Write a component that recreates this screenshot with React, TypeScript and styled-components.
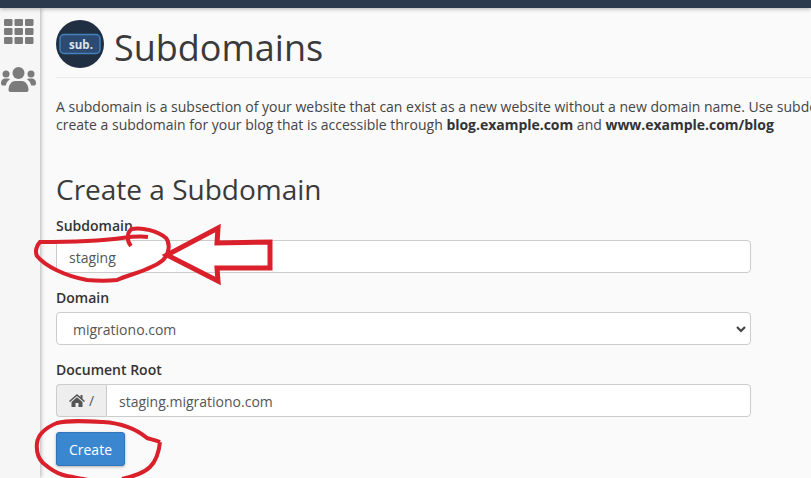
import React from "react";
import styled, { createGlobalStyle } from "styled-components";

const Global = createGlobalStyle`
  html, body { margin: 0; padding: 0; width: 811px; height: 478px; overflow: hidden; background: #fafafa; }
  body { font-family: "Open Sans", "Liberation Sans", sans-serif; color: #333; font-size: 14px; }
  * { box-sizing: border-box; }
`;

const Page = styled.div`
  position: relative;
  width: 811px;
  height: 478px;
  overflow: hidden;
  display: flex;
  flex-direction: column;
`;
const TopBar = styled.div`
  height: 8px;
  flex: none;
  background: #2b3a4c;
  box-shadow: 0 1px 4px rgba(0, 0, 0, 0.3);
  z-index: 2;
`;
const Body = styled.div`
  flex: 1;
  display: flex;
  min-height: 0;
`;
const Side = styled.nav`
  width: 40px;
  flex: none;
  background: #f6f6f6;
  box-shadow: 1px 0 4px rgba(0, 0, 0, 0.28);
  display: flex;
  flex-direction: column;
  align-items: flex-start;
  padding: 11px 0 0 1px;
  gap: 23px;
  color: #7b7b7b;
`;
const GridWrap = styled.span`
  display: flex;
  padding-left: 3px;
`;
const Main = styled.main`
  flex: 1;
  min-width: 0;
  padding: 12px 0 0 16px;
`;
const Header = styled.header`
  display: flex;
  align-items: center;
  gap: 10px;
  height: 58px;
  padding-bottom: 9px;
  border-bottom: 1px solid #eaeaea;
`;
const Title = styled.h1`
  margin: 8px 0 0;
  font-size: 36px;
  font-weight: 400;
  line-height: 48px;
  color: #3a3a3a;
`;
const Intro = styled.p`
  margin: 20px 0 0;
  font-size: 14px;
  line-height: 18px;
  white-space: nowrap;
  color: #444;
  b { font-weight: 700; color: #333; letter-spacing: -0.03px; }
`;
const SubTitle = styled.h2`
  margin: 36px 0 0;
  font-size: 28px;
  font-weight: 400;
  line-height: 38px;
  color: #3a3a3a;
`;
const Form = styled.div`
  width: 695px;
  margin-top: 8px;
`;
const Field = styled.div`
  margin-bottom: 15px;
`;
const Label = styled.label`
  display: block;
  font-size: 14px;
  font-weight: 600;
  line-height: 19px;
  margin-bottom: 5px;
  color: #333;
`;
const TextInput = styled.div<{ $flush?: boolean }>`
  height: 33px;
  flex: 1;
  background: #fff;
  border: 1px solid #ccc;
  border-radius: ${(p) => (p.$flush ? "0 4px 4px 0" : "4px")};
  padding: 1px 12px 0;
  display: flex;
  align-items: center;
  font-size: 14px;
  color: #555;
`;
const SelectBox = styled(TextInput)`
  justify-content: space-between;
  padding: 1px 4px 0 16px;
`;
const Group = styled.div`
  display: flex;
`;
const Addon = styled.div`
  width: 50px;
  height: 33px;
  flex: none;
  display: flex;
  align-items: center;
  justify-content: center;
  gap: 4px;
  background: #eee;
  border: 1px solid #ccc;
  border-right: 0;
  border-radius: 4px 0 0 4px;
  color: #555;
`;
const Button = styled.button`
  display: block;
  height: 34px;
  width: 69px;
  margin-top: 1px;
  padding: 0;
  background: #3a87cf;
  border: 1px solid #2f75b8;
  border-radius: 3px;
  box-shadow: 0 1px 3px rgba(0, 0, 0, 0.3);
  color: #fff;
  font: 400 14px "Open Sans", "Liberation Sans", sans-serif;
`;
const Overlay = styled.svg`
  position: absolute;
  left: 0;
  top: 0;
  pointer-events: none;
`;

const GridIcon = () => (
  <svg width="29.500" height="25" viewBox="0 0 29.500 25" fill="currentColor">
    {[0, 9, 18].map((y) =>
      [0, 10.5, 21].map((x) => <rect key={`${x}-${y}`} x={x} y={y} width="8.5" height="7" rx="1.2" />)
    )}
  </svg>
);
const UsersIcon = () => (
  <svg width="36" height="26" viewBox="0 0 36 26" fill="currentColor">
    <circle cx="17.500" cy="6" r="6" />
    <circle cx="5" cy="7" r="3.500" />
    <circle cx="30" cy="7" r="3.500" />
    <path d="M9.500 25c-1.200 0-2-.8-2-2 0-5 3-9 6.500-9h7c3.500 0 6.500 4 6.500 9 0 1.200-.8 2-2 2z" />
    <path d="M0 16c0-3 2-4.500 4-4.500h3c.8 0 1.500.3 2 .8-2.200 1.400-3.600 3.400-4.200 6.200H1.500C.6 18.500 0 17 0 16z" />
    <path d="M35 16c0-3-2-4.500-4-4.500h-3c-.8 0-1.500.3-2 .8 2.200 1.400 3.600 3.400 4.200 6.200h3.300c.9 0 1.500-1.500 1.500-2.500z" />
  </svg>
);
const LogoIcon = () => (
  <svg width="48" height="48" viewBox="0 0 48 48">
    <circle cx="24" cy="24" r="24" fill="#202f41" />
    <rect x="4" y="14.500" width="40" height="19" rx="4" fill="#2c4a72" stroke="#4382bd" strokeWidth="1.400" />
    <text x="25" y="28.500" textAnchor="middle" fontFamily="'Open Sans', sans-serif" fontWeight="700" fontSize="11.500" fill="#dfe4ea">sub.</text>
  </svg>
);
const HomeIcon = () => (
  <svg width="16" height="13" viewBox="0 0 16 13" fill="#555">
    <path d="M8 0 L11.500 3 V1 H13.500 V4.700 L16 7 L15 8 L8 2 L1 8 L0 7 Z" />
    <path d="M2.500 8 L8 3.300 L13.500 8 V13 H9.500 V9 H6.500 V13 H2.500 Z" />
  </svg>
);
const Chevron = () => (
  <svg width="10" height="7" viewBox="0 0 10 7" fill="none" stroke="#444" strokeWidth="2.200">
    <path d="M1 1 L5 5 L9 1" />
  </svg>
);

const App = () => (
  <Page>
    <Global />
    <TopBar />
    <Body>
      <Side>
        <GridWrap>
          <GridIcon />
        </GridWrap>
        <UsersIcon />
      </Side>
      <Main>
        <Header>
          <LogoIcon />
          <Title>Subdomains</Title>
        </Header>
        <Intro>
          A subdomain is a subsection of your website that can exist as a new website without a new domain name. Use subdomains to
          <br />
          create a subdomain for your blog that is accessible through <b>blog.example.com</b> and <b>www.example.com/blog</b>
        </Intro>
        <SubTitle>Create a Subdomain</SubTitle>
        <Form>
          <Field>
            <Label>Subdomain</Label>
            <TextInput>staging</TextInput>
          </Field>
          <Field>
            <Label>Domain</Label>
            <SelectBox>
              migrationo.com
              <Chevron />
            </SelectBox>
          </Field>
          <Field>
            <Label>Document Root</Label>
            <Group>
              <Addon>
                <HomeIcon /> /
              </Addon>
              <TextInput $flush>staging.migrationo.com</TextInput>
            </Group>
          </Field>
          <Button>Create</Button>
        </Form>
      </Main>
    </Body>
    <Overlay width="811" height="478" viewBox="0 0 811 478" fill="none" stroke="#d9202b" strokeWidth="4" strokeLinejoin="miter">
      <path d="M148 237 C140 236 130 237 122 238 C100 241 70 242 40 242 C36 246 35 252 37 256 C45 266 65 276 87 280 C98 281 108 281 117 280 C130 274 152 270 163 260 C170 253 170 243 166 238 C158 231 142 227 132 229 C127 232 126 240 131 246" />
      <path d="M167 255 L218 228 L217 243 L270 242 L270 268 L217 268 L218 281 Z" strokeWidth="5" />
      <path d="M160 442 C155 440 150 439 147 438 C135 428 120 423 103 422 C85 421 68 420 57 423 C45 428 38 435 37 443 C36 452 38 458 43 463 C50 469 56 473 63 475 C70 477 80 478 88 480 M122 479 C135 476 145 472 150 467 C156 461 159 452 160 442" />
    </Overlay>
  </Page>
);

export default App;
